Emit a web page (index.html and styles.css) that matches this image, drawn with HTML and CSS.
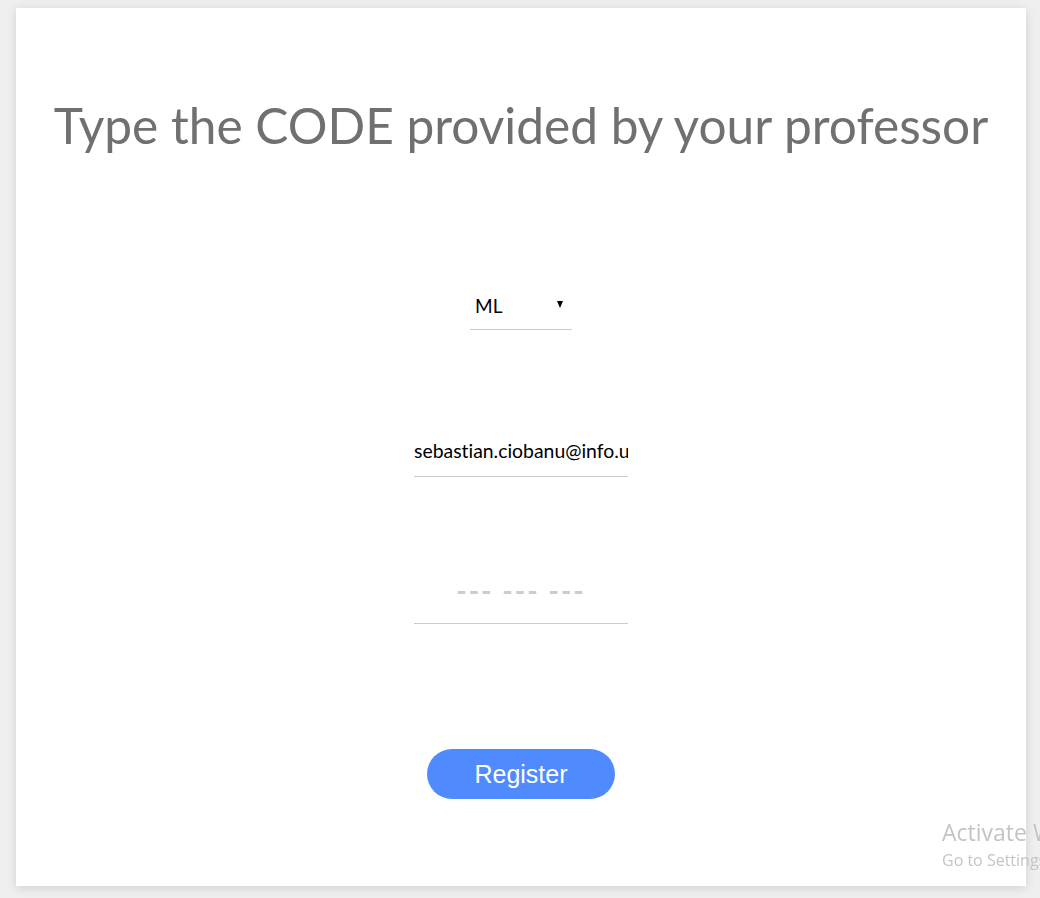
FILE: index.html
```html
<!DOCTYPE html>
<html lang="en">
<head>
<meta charset="utf-8">
<title>Register</title>
<link rel="stylesheet" href="styles.css">
</head>
<body>
<main class="card">
  <h1 class="title">Type the CODE provided by your professor</h1>
  <form class="form">
    <div class="select-wrap">
      <select class="select">
        <option>ML</option>
      </select>
      <span class="select-arrow"></span>
    </div>
    <input class="field email" type="text" value="sebastian.ciobanu@info.uaic.ro">
    <input class="field code" type="text" placeholder="--- --- ---">
    <button class="btn" type="button">Register</button>
  </form>
</main>
<div class="watermark">
  <div class="wm-title">Activate Windows</div>
  <div class="wm-sub">Go to Settings to activate Windows.</div>
</div>
</body>
</html>
```
FILE: styles.css
```css
html, body {
  margin: 0;
  padding: 0;
}
body {
  background: #efefef;
  padding: 8px 14px 12px 16px;
  font-family: Lato, "Liberation Sans", sans-serif;
  overflow: hidden;
  height: 898px;
  box-sizing: border-box;
}
.card {
  background: #fff;
  height: 878px;
  box-sizing: border-box;
  box-shadow: 0 2px 10px rgba(0, 0, 0, 0.13);
  display: flex;
  flex-direction: column;
  align-items: center;
  padding-top: 87px;
}
.title {
  margin: 0;
  font-family: Lato, sans-serif;
  font-weight: 400;
  font-size: 49.6px;
  line-height: 60px;
  color: #707070;
  white-space: nowrap;
}
.form {
  display: flex;
  flex-direction: column;
  align-items: center;
  margin-top: 130px;
}
.select-wrap {
  position: relative;
  width: 102px;
  height: 44px;
  border-bottom: 1px solid #cccccc;
}
.select {
  appearance: none;
  -webkit-appearance: none;
  border: none;
  background: transparent;
  outline: none;
  width: 100%;
  height: 100%;
  padding: 0 0 4px 5px;
  font-family: Lato, sans-serif;
  font-size: 19px;
  color: #000;
}
.select-arrow {
  position: absolute;
  left: 87px;
  top: 16px;
  width: 0;
  height: 0;
  border-left: 3.5px solid transparent;
  border-right: 3.5px solid transparent;
  border-top: 7px solid #000;
  pointer-events: none;
}
.field {
  width: 214px;
  height: 32px;
  padding: 0 0 10px 0;
  border: none;
  border-bottom: 1px solid #cccccc;
  outline: none;
  font-family: Lato, sans-serif;
  font-size: 19.4px;
  font-variant-ligatures: none;
  color: #000;
  background: transparent;
  box-sizing: content-box;
}
.email {
  margin-top: 104px;
}
.code {
  margin-top: 104px;
  height: 18px;
  padding-bottom: 24px;
  text-align: center;
  font-size: 28px;
  font-weight: 700;
  letter-spacing: 2px;
}
.code::placeholder {
  color: #cccccc;
}
.btn {
  margin-top: 125px;
  width: 188px;
  height: 50px;
  border: none;
  border-radius: 25px;
  background: #4f8bff;
  color: #fff;
  font-family: "Liberation Sans", Arial, sans-serif;
  font-size: 25px;
  cursor: pointer;
}
.watermark {
  position: fixed;
  left: 942px;
  top: 816px;
  white-space: nowrap;
  color: #c4c4c4;
  font-family: "Open Sans", "Noto Sans", sans-serif;
}
.wm-title {
  font-size: 23px;
  line-height: 32px;
}
.wm-sub {
  font-size: 16px;
  line-height: 24px;
}
```
